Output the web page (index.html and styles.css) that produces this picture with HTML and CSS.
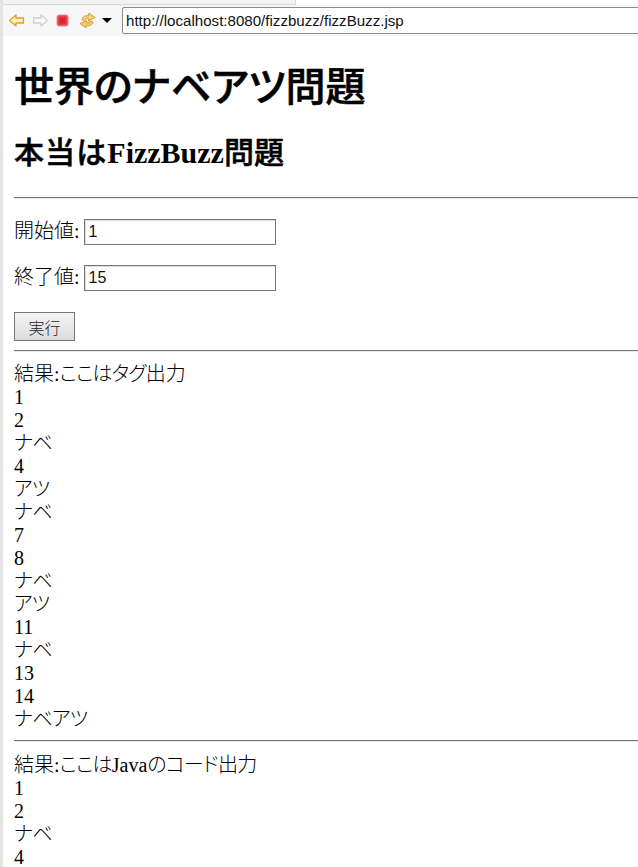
FILE: index.html
```html
<!DOCTYPE html>
<html lang="ja">
<head>
<meta charset="UTF-8" />
<title>fizzBuzz</title>
<link rel="stylesheet" href="styles.css">
</head>
<body>
  <div class="tabstrip"><div class="tab"></div></div>
  <div class="toolbar">
    <svg class="icon" width="17" height="17" viewBox="0 0 17 17"><path d="M1.500 8.500 L8 3 V6 H15.500 V11 H8 V14 Z" fill="#fdeeb8" stroke="#dca32c" stroke-width="1.300" stroke-linejoin="round"/></svg>
    <svg class="icon" width="17" height="17" viewBox="0 0 17 17"><path d="M15.500 8.500 L9 3 V6 H1.500 V11 H9 V14 Z" fill="#fafafa" stroke="#cfcfcf" stroke-width="1.300" stroke-linejoin="round"/></svg>
    <svg class="icon" width="13" height="13" viewBox="0 0 13 13"><rect x="1" y="1" width="11" height="11" rx="2" fill="#e8414c" stroke="#e58a90"/><rect x="3.500" y="3.500" width="6" height="6" fill="#d92231"/></svg>
    <svg class="icon sync" width="17" height="17" viewBox="0 0 17 17"><path d="M3 8 C3.500 4.500 6.500 3 9.500 4 L10 1 L16 5.500 L9.500 9 L9.500 6.800 C7.500 6 6 6.800 5.500 8.500 Z" fill="#f8d27a" stroke="#c98f2a" stroke-width=".8" stroke-linejoin="round"/><path d="M14 10 C13.500 13 10.500 14.500 7.500 13.500 L7 16 L1 11.500 L7.500 8.500 L7.500 10.500 C9.500 11.200 11 10.500 11.500 9 Z" fill="#f6c860" stroke="#c98f2a" stroke-width=".8" stroke-linejoin="round"/></svg>
    <span class="caret"></span>
    <input class="urlbar" type="text" value="http://localhost:8080/fizzbuzz/fizzBuzz.jsp">
  </div>
  <div class="page">
    <h1>世界のナベアツ問題</h1>
    <h2><span class="wide">本当は</span><b>FizzBuzz</b>問題</h2>
    <hr>
    <form>
      <p class="field"><span class="label">開始値:</span><input class="num" type="text" value="1"></p>
      <p class="field"><span class="label">終了値:</span><input class="num" type="text" value="15"></p>
      <button class="run" type="button">実行</button>
    </form>
    <hr class="tight">
    <div class="result">
      結果:<span class="kana">ここはタグ</span>出力<br>
      1<br>2<br><span class="kana">ナベ</span><br>4<br><span class="kana">アツ</span><br><span class="kana">ナベ</span><br>7<br>8<br><span class="kana">ナベ</span><br><span class="kana">アツ</span><br>11<br><span class="kana">ナベ</span><br>13<br>14<br><span class="kana">ナベアツ</span>
    </div>
    <hr class="tight">
    <div class="result second">
      結果:<span class="kana">ここは</span>Java<span class="kana">のコード出力</span><br>
      1<br>2<br><span class="kana">ナベ</span><br>4
    </div>
  </div>
</body>
</html>
```
FILE: styles.css
```css
html, body {
  margin: 0; padding: 0;
  height: 100%;
  background: #fff;
  overflow: hidden;
}
body {
  font-family: "Liberation Serif", "Noto Sans CJK JP", serif;
  font-size: 20px;
  font-weight: 300;
  font-feature-settings: "palt";
  line-height: 23px;
  color: #000;
  border-left: 3px solid #e4e4e4;
  box-sizing: border-box;
}
.tabstrip {
  height: 5px;
  background: #fff;
}
.tab {
  width: 292px;
  height: 4px;
  background: #f2f2f2;
  border-right: 1px solid #d8d8d8;
  border-bottom: 1px solid #d8d8d8;
}
.toolbar {
  display: flex;
  align-items: center;
  height: 31px;
  background: #f7f7f7;
  padding-left: 5px;
}
.icon { flex: none; margin-right: 7px; }
.sync { margin-left: 3px; margin-right: 6px; }
.caret {
  flex: none;
  width: 0; height: 0;
  margin-right: 10px;
  border-left: 5px solid transparent;
  border-right: 5px solid transparent;
  border-top: 5px solid #000;
}
.urlbar {
  flex: none;
  width: 530px;
  height: 27px;
  box-sizing: border-box;
  padding: 0 3px;
  border: 1px solid #8a8a8a;
  border-radius: 2px;
  font-family: "Liberation Sans", "Noto Sans", sans-serif;
  font-size: 15.100px;
  color: #111;
  background: #fff;
}
.page {
  width: 640px;
  padding-left: 11px;
}
h1 {
  font-size: 40px;
  line-height: 46px;
  margin: 0;
  padding-top: 29px;
  font-weight: 500;
  -webkit-text-stroke: .6px #000;
}
h2 {
  font-size: 30px;
  line-height: 34px;
  margin: 0;
  padding-top: 25px;
  font-weight: 500;
  -webkit-text-stroke: .5px #000;
}
h2 b { font-weight: bold; -webkit-text-stroke: 0; }
.wide { letter-spacing: 1.100px; }
.kana { letter-spacing: -.8px; }
hr {
  margin: 27px 0 0;
  border: 0;
  border-top: 1px solid #777;
  border-bottom: 1px solid #e8e8e8;
}
hr.tight { margin-top: 9px; }
.field {
  margin: 0;
  padding-top: 20px;
  height: 26px;
  display: flex;
  align-items: center;
}
.label { padding-bottom: 1px; }
.num {
  width: 192px;
  height: 26px;
  box-sizing: border-box;
  margin-left: 4px;
  padding: 0 4px;
  border: 1px solid #777;
  box-shadow: inset 1px 1px 0 #ddd;
  font-family: "Liberation Sans", sans-serif;
  font-size: 16px;
  color: #111;
}
.run {
  display: block;
  width: 61px;
  height: 29px;
  margin-top: 21px;
  padding: 0;
  border: 1px solid #777;
  background: linear-gradient(#f4f4f4, #dcdcdc);
  font-family: "Noto Sans CJK JP", sans-serif;
  font-size: 16px;
  font-weight: 300;
  color: #222;
}
.result { padding-top: 11px; }
.second { padding-top: 12px; }
```
